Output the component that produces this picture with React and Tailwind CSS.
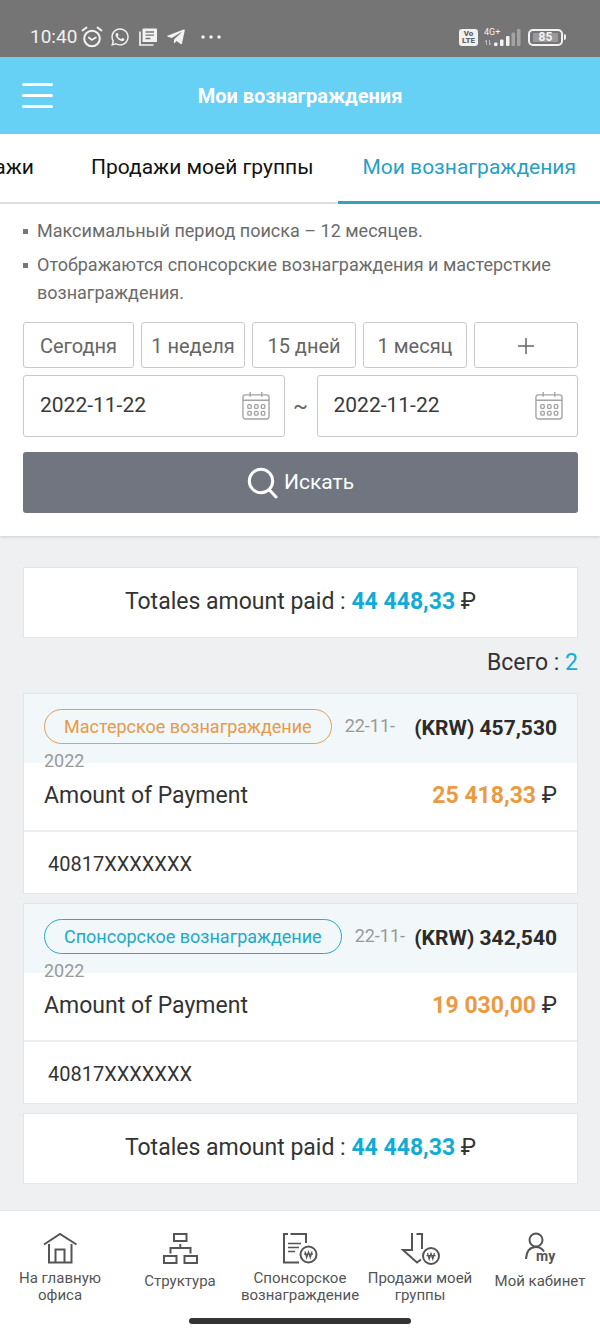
import React, { useState } from "react";
import { FaWhatsapp, FaTelegramPlane } from "react-icons/fa";

function StatusBar() {
  return (
    <div className="flex h-[57px] items-end justify-between bg-[#757575] pr-[34px] pb-[8px] pl-[30px] text-[#f2f2f2]">
      <div className="flex h-6 items-center">
        <span className="text-[19px] leading-6">10:40</span>
        <svg className="ml-1 h-[22px] w-[22px]" viewBox="0 0 22 22" fill="none" stroke="currentColor" strokeWidth="2" strokeLinecap="round">
          <circle cx="11" cy="12.5" r="7.8" />
          <path d="M1.5 4.5 5.5 1.5M20.5 4.5l-4-3" />
          <path d="m7.8 11.5 3 2.5 4-2.5" strokeWidth="1.7" />
        </svg>
        <FaWhatsapp className="ml-[7px] h-5 w-5" />
        <svg className="ml-[9px] h-[18px] w-[18px]" viewBox="0 0 18 18">
          <path d="M1 3.5V17h13.5" fill="none" stroke="currentColor" strokeWidth="1.7" />
          <path d="M0 1h3.5v13H18V1.5A1 1 0 0 0 17 .5H4.500L3.500 1Z" fill="currentColor" />
          <path d="M6.500 4h8.500M6.500 7.200h8.500M6.500 10.500h5" stroke="#757575" strokeWidth="1.3" />
        </svg>
        <FaTelegramPlane className="ml-[9px] h-5 w-5" />
        <svg className="ml-[15px] h-1 w-5" viewBox="0 0 20 4" fill="currentColor">
          <circle cx="2" cy="2" r="1.700" />
          <circle cx="10" cy="2" r="1.700" />
          <circle cx="18" cy="2" r="1.700" />
        </svg>
      </div>
      <div className="flex h-6 items-center">
        <span className="flex h-[17px] w-[19px] flex-col items-center justify-center rounded-[3px] bg-[#f2f2f2] text-[8px] leading-[7px] font-black text-[#666]">
          <span>Vo</span>
          <span>LTE</span>
        </span>
        <svg className="ml-[6px] h-[20px] w-[37px]" viewBox="0 0 37 20" fill="currentColor">
          <text x="0" y="8" fontSize="9" fontFamily="Roboto, sans-serif">4G+</text>
          <path d="M2.500 13v5M1 15l1.500-2M5.500 13v5M5.500 18l1.500-2" stroke="#bbb" strokeWidth="1" fill="none" />
          <rect x="10" y="15.500" width="3.500" height="3.500" rx="1" />
          <rect x="16" y="12.500" width="3.500" height="6.500" rx="1" />
          <rect x="22" y="9" width="3.500" height="10" rx="1" />
          <rect x="27.500" y="5.500" width="3.500" height="13.500" rx="1" fill="#a3a3a3" />
          <rect x="33" y="2" width="3.500" height="17" rx="1" fill="#a3a3a3" />
        </svg>
        <span className="ml-[7px] flex h-[17px] w-[35px] items-center justify-center rounded-[5px] border-2 border-[#f2f2f2]">
          <span className="flex h-[9px] w-[25px] items-center justify-center bg-[#999] text-[12px] font-bold">85</span>
        </span>
        <span className="ml-px h-[6px] w-[2px] rounded-r bg-[#f2f2f2]" />
      </div>
    </div>
  );
}

function Header() {
  return (
    <header className="grid h-[77px] grid-cols-[31px_1fr_31px] items-center bg-[#66d0f5] px-[22px] text-white">
      <button type="button" aria-label="Меню" className="flex flex-col gap-2">
        <span className="h-[3px] w-full rounded-full bg-white" />
        <span className="h-[3px] w-full rounded-full bg-white" />
        <span className="h-[3px] w-full rounded-full bg-white" />
      </button>
      <h1 className="text-center text-[20px] font-bold">Мои вознаграждения</h1>
    </header>
  );
}

function Tabs() {
  return (
    <nav className="flex h-[70px] justify-end overflow-hidden bg-white text-[21px] whitespace-nowrap text-[#111]">
      <a href="#sales" className="flex shrink-0 items-center border-b-2 border-[#dedede] pr-8">Мои продажи</a>
      <a href="#group" className="flex shrink-0 items-center border-b-2 border-[#dedede] px-[25px]">Продажи моей группы</a>
      <a href="#rewards" aria-current="page" className="flex shrink-0 items-center border-b-[3px] border-[#35a0bf] px-6 text-[#289fc4]">Мои вознаграждения</a>
    </nav>
  );
}

function CalendarIcon() {
  return (
    <svg className="h-7 w-7" viewBox="0 0 29 29" fill="none" stroke="#a3a3a3" strokeWidth="1.400">
      <rect x="1" y="3" width="27" height="25" rx="2.500" />
      <path d="M1 8.500h27M8.500 0v5M20.500 0v5" />
      <g>
        <rect x="6" y="13" width="3.600" height="4" rx="1" />
        <rect x="13" y="13" width="3.600" height="4" rx="1" />
        <rect x="20" y="13" width="3.600" height="4" rx="1" />
        <rect x="6" y="20" width="3.600" height="4" rx="1" />
        <rect x="13" y="20" width="3.600" height="4" rx="1" />
        <rect x="20" y="20" width="3.600" height="4" rx="1" />
      </g>
    </svg>
  );
}

function DateField({ label }) {
  const [value, setValue] = useState("2022-11-22");
  return (
    <div className="flex h-[62px] min-w-0 flex-1 items-center rounded-[3px] border border-[#c9c9c9] pr-[14px] pl-4">
      <input
        type="text"
        aria-label={label}
        value={value}
        onChange={(e) => setValue(e.target.value)}
        className="w-full min-w-0 flex-1 bg-transparent text-[21px] text-[#3a3a3a] outline-none"
      />
      <button type="button" aria-label="Календарь" className="shrink-0">
        <CalendarIcon />
      </button>
    </div>
  );
}

const periodClass = "h-[46px] rounded-[3px] border border-[#c9c9c9] pt-px text-[20px] text-[#666]";

function SearchPanel() {
  return (
    <section className="bg-white pt-[13px] pr-[22px] pb-[23px] pl-[23px] shadow-[0_1px_3px_rgba(0,0,0,0.15)]">
      <ul className="flex flex-col gap-[6px] text-[18px] leading-7 text-[#6b6b6b]">
        <li className="flex">
          <span className="mt-3 mr-[9px] h-[5px] w-[5px] shrink-0 bg-[#777]" />
          <span>Максимальный период поиска – 12 месяцев.</span>
        </li>
        <li className="flex">
          <span className="mt-3 mr-[9px] h-[5px] w-[5px] shrink-0 bg-[#777]" />
          <span>Отображаются спонсорские вознаграждения и мастерсткие вознаграждения.</span>
        </li>
      </ul>
      <div className="mt-[15px] grid grid-cols-[111fr_104fr_104fr_104fr_104fr] gap-[7px]">
        <button type="button" className={periodClass}>Сегодня</button>
        <button type="button" className={periodClass}>1 неделя</button>
        <button type="button" className={periodClass}>15 дней</button>
        <button type="button" className={periodClass}>1 месяц</button>
        <button type="button" aria-label="Ещё" className={periodClass + " flex items-center justify-center"}>
          <svg className="h-4 w-4" viewBox="0 0 16 16" stroke="#666" strokeWidth="1.500">
            <path d="M8 0v16M0 8h16" />
          </svg>
        </button>
      </div>
      <div className="mt-[7px] flex items-center">
        <DateField label="Начало периода" />
        <span className="w-8 text-center text-[22px] leading-7 text-[#666]">~</span>
        <DateField label="Конец периода" />
      </div>
      <button type="button" className="mt-[15px] flex h-[61px] w-full items-center justify-center gap-[5px] rounded-[3px] bg-[#70757f] text-[21px] text-white">
        <svg className="h-8 w-8" viewBox="0 0 32 32" fill="none" stroke="currentColor" strokeWidth="3" strokeLinecap="round">
          <circle cx="14" cy="14" r="11.700" />
          <path d="m22.500 23 6.500 7" />
        </svg>
        Искать
      </button>
    </section>
  );
}

function TotalCard() {
  return (
    <p className="flex h-[71px] items-center justify-center border border-[#e3e5e8] bg-white text-[23px] text-[#333]">
      <span>
        Totales amount paid : <strong className="text-[#12abd6]">44 448,33</strong> ₽
      </span>
    </p>
  );
}

function RewardCard({ title, tone, krw, amount }) {
  return (
    <article className="border border-[#e3e5e8] bg-white text-[#333]">
      <div className="h-[69px] bg-[#f2f7fa] px-[20px] pt-[15px] text-[18px] leading-[34px] text-[#999]">
        <strong className="float-right pt-[2px] text-[21px] text-[#2b2b2b]">(KRW) {krw}</strong>
        <span className={"mr-[13px] inline-block rounded-full border px-[19px] align-top leading-[33px] " + tone}>{title}</span>
        <span>22-11-</span>
        <wbr />
        <span>2022</span>
      </div>
      <div className="flex h-[69px] items-center justify-between border-b-2 border-[#eceef0] px-[20px] text-[23px]">
        <span>Amount of Payment</span>
        <span>
          <strong className="text-[#eb9a42]">{amount}</strong> ₽
        </span>
      </div>
      <div className="flex h-[61px] items-center px-6 pt-[3px] text-[20px]">40817XXXXXXX</div>
    </article>
  );
}

const iconProps = {
  className: "h-8 w-10 overflow-visible",
  viewBox: "0 0 40 32",
  fill: "none",
  stroke: "currentColor",
  strokeWidth: "2",
};

function HomeIcon() {
  return (
    <svg {...iconProps}>
      <path d="M4 12.500 20 2l16.500 10.500M9 12v18.500h22.500V12M15.500 30V17.500h9V30" />
    </svg>
  );
}

function TreeIcon() {
  return (
    <svg {...iconProps}>
      <path d="M14 2h12.500v7H14zM4 24h12.500v7H4zM24.500 24H37v7H24.500zM20.300 12v4M10.500 21.500V16h20v5.500" />
    </svg>
  );
}

function Won({ cx, cy }) {
  return (
    <g>
      <circle cx={cx} cy={cy} r="8" />
      <g transform={`translate(${cx} ${cy})`} strokeWidth="1.300">
        <path d="m-3.500-3 1.700 6L0-2.500 1.800 3l1.700-6M-4.500-.300h9" />
      </g>
    </g>
  );
}

function ReportIcon() {
  return (
    <svg {...iconProps}>
      <path d="M8 2H4v28.500h15M10.500 2H26v9" />
      <path d="M8 11.500h13M8 15.500h11M8 19.500h7" strokeWidth="1.500" />
      <Won cx={28.500} cy={22.500} />
    </svg>
  );
}

function ArrowIcon() {
  return (
    <svg {...iconProps}>
      <path d="M12 1v17H3l14 12.500 4-3M16.500 2H22v15" />
      <Won cx={31} cy={24} />
    </svg>
  );
}

function MyIcon() {
  return (
    <svg {...iconProps}>
      <circle cx="16" cy="8" r="6.500" />
      <path d="M6 27c.500-7.500 4-12 10-12 3.500 0 6 1.500 8 4.500" />
      <text x="16" y="29" fontSize="14" fontWeight="700" fontFamily="Roboto, sans-serif" fill="currentColor" stroke="none">my</text>
    </svg>
  );
}

const navItems = [
  { label: ["На главную", "офиса"], href: "#home", Icon: HomeIcon },
  { label: ["Структура"], href: "#structure", Icon: TreeIcon },
  { label: ["Спонсорское", "вознаграждение"], href: "#sponsor", Icon: ReportIcon },
  { label: ["Продажи моей", "группы"], href: "#group-sales", Icon: ArrowIcon },
  { label: ["Мой кабинет"], href: "#account", Icon: MyIcon },
];

function BottomNav() {
  return (
    <footer className="border-t border-[#e1e3e5] bg-white pt-[21px] pb-2">
      <nav className="grid grid-cols-5">
        {navItems.map(({ label, href, Icon }) => (
          <a key={href} href={href} className="flex h-[73px] flex-col items-center text-center text-[15px] leading-[17px] whitespace-nowrap text-[#555]">
            <Icon />
            <span className={label.length > 1 ? "mt-[6px]" : "mt-[9px]"}>
              {label.map((line) => (
                <span key={line} className="block">{line}</span>
              ))}
            </span>
          </a>
        ))}
      </nav>
      <div className="mx-auto mt-[13px] h-[6px] w-[37%] rounded-full bg-[#333]" />
    </footer>
  );
}

export default function App() {
  return (
    <div className="bg-[#eff0f2] font-[Roboto,'Noto_Sans',sans-serif]">
      <StatusBar />
      <Header />
      <Tabs />
      <SearchPanel />
      <main className="pt-[31px] pr-[22px] pb-[26px] pl-[23px]">
        <TotalCard />
        <p className="flex h-[55px] items-center justify-end pb-1 text-[23px] text-[#333]">
          <span>
            Всего : <span className="text-[#12abd6]">2</span>
          </span>
        </p>
        <div className="flex flex-col gap-[9px]">
          <RewardCard title="Мастерское вознаграждение" tone="border-[#e0a05a] text-[#e59a48]" krw="457,530" amount="25 418,33" />
          <RewardCard title="Спонсорское вознаграждение" tone="border-[#26abc6] text-[#1ea9c6]" krw="342,540" amount="19 030,00" />
          <TotalCard />
        </div>
      </main>
      <BottomNav />
    </div>
  );
}
